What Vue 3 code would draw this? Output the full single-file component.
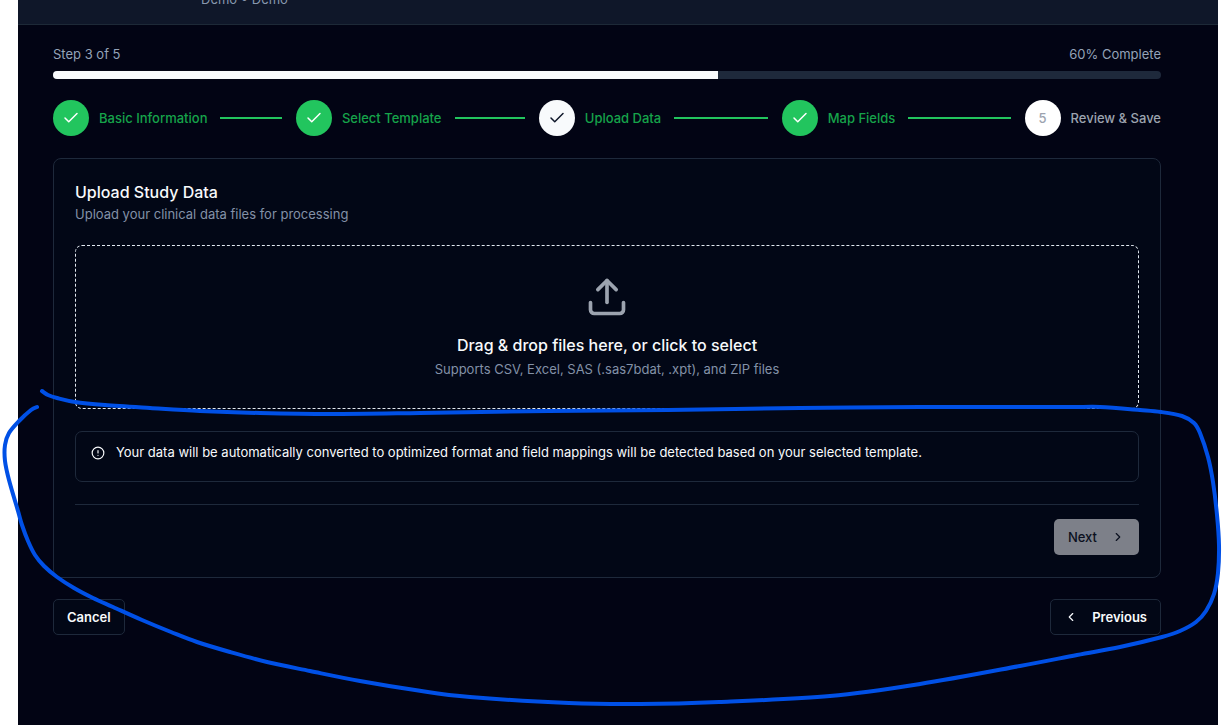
<script setup>
const progress = 60
const steps = [
  { label: 'Basic Information', state: 'done' },
  { label: 'Select Template', state: 'done' },
  { label: 'Upload Data', state: 'current' },
  { label: 'Map Fields', state: 'done' },
  { label: 'Review & Save', state: 'pending' },
]

// Freehand pen stroke, smoothed through its sampled points.
const stroke = [
  [42, 391], [48, 395], [57, 398], [75, 402], [105, 405], [150, 408], [200, 411], [260, 413],
  [330, 414], [420, 413], [549, 411], [668, 410], [800, 408], [920, 407], [1070, 407], [1100, 407],
  [1140, 410], [1161, 412], [1182, 416], [1194, 423], [1200, 433], [1208, 457], [1213, 482],
  [1217, 515], [1219, 545], [1218, 573], [1214, 594], [1206, 611], [1196, 622], [1180, 631],
  [1162, 637], [1120, 647], [1077, 655], [1020, 666], [920, 684], [830, 696], [719, 702],
  [640, 704], [569, 703], [470, 697], [415, 690], [360, 681], [310, 671], [267, 662], [230, 652],
  [197, 642], [171, 632], [142, 620], [113, 607], [93, 598], [74, 588], [57, 577], [44, 566],
  [35, 555], [28, 541], [22, 525], [18, 511], [9, 480], [5, 461], [5, 445], [9, 433], [19, 421],
  [31, 410], [37, 407],
]
const at = (i) => stroke[Math.max(0, Math.min(stroke.length - 1, i))]
const strokePath = stroke.slice(0, -1).reduce((d, _, i) => {
  const [a, b, c, e] = [at(i - 1), at(i), at(i + 1), at(i + 2)]
  const c1 = [b[0] + (c[0] - a[0]) / 6, b[1] + (c[1] - a[1]) / 6]
  const c2 = [c[0] - (e[0] - b[0]) / 6, c[1] - (e[1] - b[1]) / 6]
  return `${d} C${c1.join(' ')} ${c2.join(' ')} ${c.join(' ')}`
}, `M${stroke[0].join(' ')}`)
</script>

<template>
  <div class="page">
    <div class="app">
      <header class="topbar">
        <p class="crumb">Demo • Demo</p>
      </header>

      <main class="content">
        <div class="status">
          <span id="step-label">Step 3 of 5</span>
          <span>{{ progress }}% Complete</span>
        </div>
        <div class="track" role="progressbar" aria-labelledby="step-label" :aria-valuenow="progress">
          <div class="fill" :style="{ width: progress + '%' }"></div>
        </div>

        <ol class="steps">
          <li v-for="(step, i) in steps" :key="step.label" class="step" :class="step.state">
            <span class="dot">
              <svg v-if="step.state !== 'pending'" class="check" viewBox="0 0 24 24" aria-hidden="true">
                <path d="M20 6 9 17l-5-5" />
              </svg>
              <template v-else>{{ i + 1 }}</template>
            </span>
            <span class="label">{{ step.label }}</span>
            <span v-if="i < steps.length - 1" class="line"></span>
          </li>
        </ol>

        <section class="card">
          <h2 class="title">Upload Study Data</h2>
          <p class="subtitle">Upload your clinical data files for processing</p>

          <button type="button" class="dropzone">
            <svg class="upload" viewBox="0 0 24 24" aria-hidden="true">
              <path d="M21 15v4a2 2 0 0 1-2 2H5a2 2 0 0 1-2-2v-4" />
              <path d="m17 8-5-5-5 5" />
              <path d="M12 3v12" />
            </svg>
            <span class="drop-title">Drag &amp; drop files here, or click to select</span>
            <span class="drop-hint">Supports CSV, Excel, SAS (.sas7bdat, .xpt), and ZIP files</span>
          </button>

          <div class="notice" role="note">
            <svg class="info" viewBox="0 0 24 24" aria-hidden="true">
              <circle cx="12" cy="12" r="10" />
              <path d="M12 8v4" />
              <path d="M12 16h.01" />
            </svg>
            <p>Your data will be automatically converted to optimized format and field mappings will be detected based on your selected template.</p>
          </div>

          <div class="card-footer">
            <button type="button" class="btn next" disabled>
              Next
              <svg class="chevron" viewBox="0 0 24 24" aria-hidden="true"><path d="m9 18 6-6-6-6" /></svg>
            </button>
          </div>
        </section>

        <div class="actions">
          <button type="button" class="btn outline">Cancel</button>
          <button type="button" class="btn outline">
            <svg class="chevron" viewBox="0 0 24 24" aria-hidden="true"><path d="m15 18-6-6 6-6" /></svg>
            Previous
          </button>
        </div>
      </main>
    </div>

    <svg class="markup" viewBox="0 0 1222 725" preserveAspectRatio="none" aria-hidden="true">
      <path :d="strokePath" />
    </svg>
  </div>
</template>

<style>
body {
  margin: 0;
  background: #fff;
}
</style>

<style scoped>
.page {
  position: relative;
  min-height: 100vh;
  display: flex;
  padding: 0 4px 0 18px;
  box-sizing: border-box;
  overflow: hidden;
  font-family: Inter, "Liberation Sans", sans-serif;
  font-size: 13px;
  line-height: 18px;
  color: #f8fafc;
}
.app {
  flex: 1;
  min-width: 0;
  background: #020414;
}
p,
h2,
ol {
  margin: 0;
  padding: 0;
}
svg {
  fill: none;
  stroke: currentColor;
  stroke-width: 2;
  stroke-linecap: round;
  stroke-linejoin: round;
  flex: none;
}
.topbar {
  margin-top: -10px;
  padding: 0 183px 16px;
  background: #0f1729;
  border-bottom: 1px solid #1d2937;
  color: #8797ad;
}
.content {
  padding: 20px 57px 90px 35px;
}
.status {
  display: flex;
  justify-content: space-between;
  color: #94a3b8;
}
.track {
  height: 8px;
  margin-top: 8px;
  border-radius: 4px;
  overflow: hidden;
  background: #1e293b;
}
.fill {
  height: 100%;
  background: #f8fafc;
}
.steps {
  display: grid;
  grid-template-columns: repeat(4, 1fr) auto;
  margin-top: 21px;
  list-style: none;
}
.step {
  display: flex;
  align-items: center;
  font-weight: 500;
  color: #16a34a;
  white-space: nowrap;
}
.dot {
  display: flex;
  align-items: center;
  justify-content: center;
  flex: none;
  width: 36px;
  height: 36px;
  margin-right: 10px;
  border-radius: 50%;
  background: #22c55e;
  color: #fff;
}
.current .dot {
  background: #f8fafc;
  color: #0f172a;
}
.pending {
  color: #9ca3af;
}
.pending .dot {
  background: #fff;
  color: #9ca3af;
}
.check {
  width: 18px;
  height: 18px;
}
.line {
  flex: 1;
  height: 2px;
  margin: 0 14px 0 13px;
  background: #22c55e;
}
.card {
  margin-top: 22px;
  padding: 21px 21px 22px;
  border: 1px solid #1e293b;
  border-radius: 8px;
  background: #020716;
}
.title {
  font-size: 16px;
  line-height: 24px;
  font-weight: 500;
}
.subtitle {
  margin-top: 1px;
  color: #8391a7;
}
.dropzone {
  display: flex;
  flex-direction: column;
  align-items: center;
  width: 100%;
  margin-top: 22px;
  padding: 29px 20px 30px;
  border: 1px dashed #e2e8f0;
  border-radius: 7px;
  background: transparent;
  color: inherit;
  font: inherit;
}
.upload {
  width: 44px;
  height: 44px;
  color: #9ca3af;
}
.drop-title {
  margin-top: 14px;
  font-size: 16px;
  line-height: 24px;
  font-weight: 500;
}
.drop-hint {
  margin-top: 3px;
  color: #8391a7;
}
.notice {
  display: flex;
  gap: 11px;
  margin-top: 22px;
  padding: 11px 15px 20px;
  border: 1px solid #1e293b;
  border-radius: 7px;
}
.info {
  width: 14px;
  height: 14px;
  margin-top: 3px;
}
.card-footer {
  display: flex;
  justify-content: flex-end;
  margin-top: 22px;
  padding-top: 14px;
  border-top: 1px solid #1e293b;
}
.btn {
  display: inline-flex;
  align-items: center;
  gap: 14px;
  height: 36px;
  padding: 0 14px;
  border: 0;
  border-radius: 5px;
  font: inherit;
  font-weight: 500;
}
.next {
  background: #7d8089;
  color: #0b1020;
}
.outline {
  padding: 0 13px;
  border: 1px solid #1e293b;
  background: #020716;
  color: #f8fafc;
  font-weight: 600;
}
.chevron {
  width: 14px;
  height: 14px;
}
.actions {
  display: flex;
  justify-content: space-between;
  margin-top: 21px;
}
.markup {
  position: absolute;
  inset: 0;
  width: 100%;
  height: 100%;
  stroke: #0050e6;
  stroke-width: 4;
  pointer-events: none;
}
</style>
